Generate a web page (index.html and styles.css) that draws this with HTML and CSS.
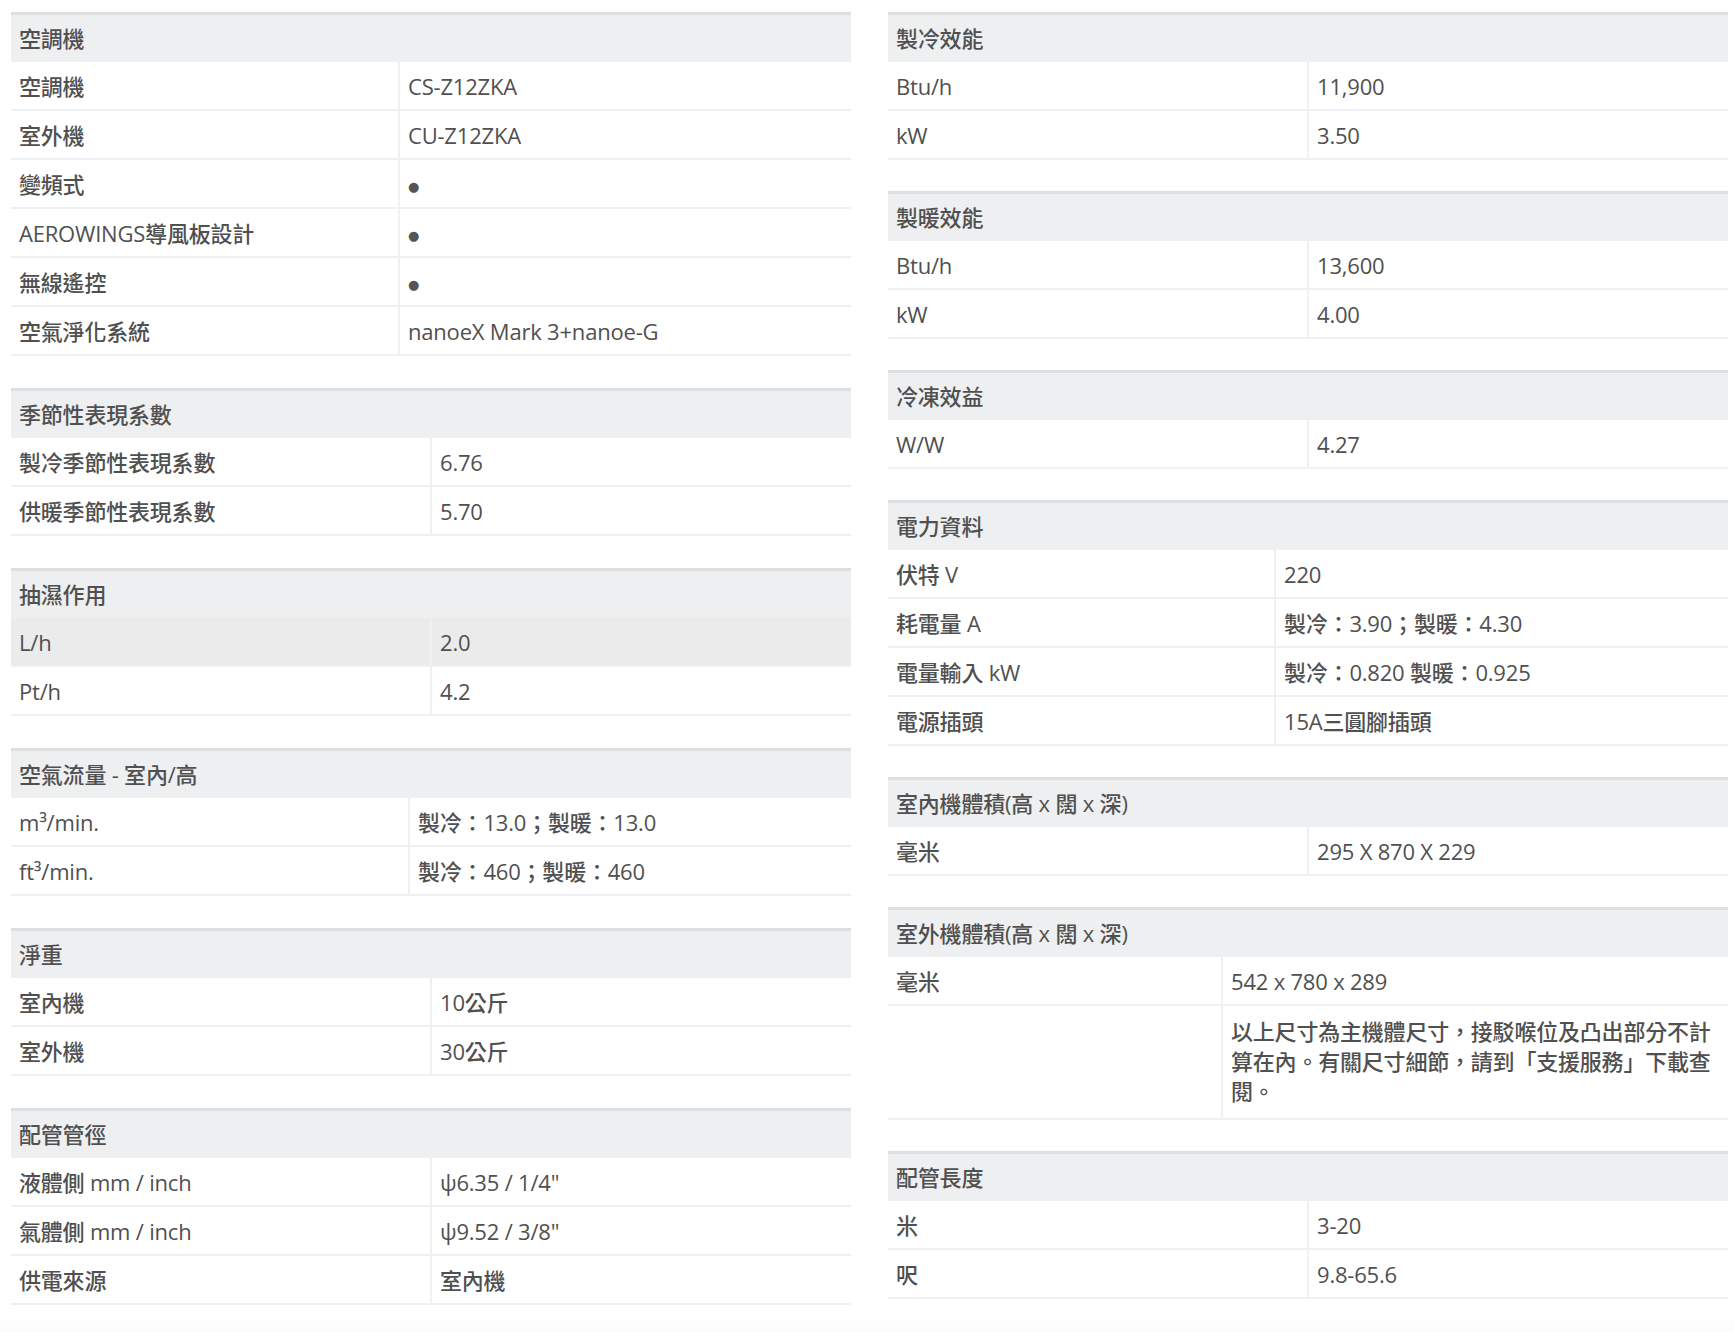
FILE: index.html
```html
<!DOCTYPE html>
<html lang="zh-Hant">
<head>
<meta charset="utf-8">
<title>規格</title>
<link rel="stylesheet" href="styles.css">
</head>
<body>
<main class="specs">
  <div class="col col--left">
    <section class="spec spec--k387">
      <div class="spec-head">空調機</div>
      <div class="spec-row"><div class="k">空調機</div><div class="v">CS-Z12ZKA</div></div>
      <div class="spec-row"><div class="k">室外機</div><div class="v">CU-Z12ZKA</div></div>
      <div class="spec-row"><div class="k">變頻式</div><div class="v"><span class="dot">●</span></div></div>
      <div class="spec-row"><div class="k">AEROWINGS導風板設計</div><div class="v"><span class="dot">●</span></div></div>
      <div class="spec-row"><div class="k">無線遙控</div><div class="v"><span class="dot">●</span></div></div>
      <div class="spec-row"><div class="k">空氣淨化系統</div><div class="v">nanoeX Mark 3+nanoe-G</div></div>
    </section>
    <section class="spec">
      <div class="spec-head">季節性表現系數</div>
      <div class="spec-row"><div class="k">製冷季節性表現系數</div><div class="v">6.76</div></div>
      <div class="spec-row"><div class="k">供暖季節性表現系數</div><div class="v">5.70</div></div>
    </section>
    <section class="spec">
      <div class="spec-head">抽濕作用</div>
      <div class="spec-row is-hover"><div class="k">L/h</div><div class="v">2.0</div></div>
      <div class="spec-row"><div class="k">Pt/h</div><div class="v">4.2</div></div>
    </section>
    <section class="spec spec--k397">
      <div class="spec-head">空氣流量 - 室內/高</div>
      <div class="spec-row"><div class="k">m³/min.</div><div class="v">製冷：13.0；製暖：13.0</div></div>
      <div class="spec-row"><div class="k">ft³/min.</div><div class="v">製冷：460；製暖：460</div></div>
    </section>
    <section class="spec">
      <div class="spec-head">淨重</div>
      <div class="spec-row"><div class="k">室內機</div><div class="v">10公斤</div></div>
      <div class="spec-row"><div class="k">室外機</div><div class="v">30公斤</div></div>
    </section>
    <section class="spec">
      <div class="spec-head">配管管徑</div>
      <div class="spec-row"><div class="k">液體側 mm / inch</div><div class="v">ψ6.35 / 1/4"</div></div>
      <div class="spec-row"><div class="k">氣體側 mm / inch</div><div class="v">ψ9.52 / 3/8"</div></div>
      <div class="spec-row"><div class="k">供電來源</div><div class="v">室內機</div></div>
    </section>
  </div>
  <div class="col">
    <section class="spec">
      <div class="spec-head">製冷效能</div>
      <div class="spec-row"><div class="k">Btu/h</div><div class="v">11,900</div></div>
      <div class="spec-row"><div class="k">kW</div><div class="v">3.50</div></div>
    </section>
    <section class="spec">
      <div class="spec-head">製暖效能</div>
      <div class="spec-row"><div class="k">Btu/h</div><div class="v">13,600</div></div>
      <div class="spec-row"><div class="k">kW</div><div class="v">4.00</div></div>
    </section>
    <section class="spec">
      <div class="spec-head">冷凍效益</div>
      <div class="spec-row"><div class="k">W/W</div><div class="v">4.27</div></div>
    </section>
    <section class="spec spec--k386">
      <div class="spec-head">電力資料</div>
      <div class="spec-row"><div class="k">伏特 V</div><div class="v">220</div></div>
      <div class="spec-row"><div class="k">耗電量 A</div><div class="v">製冷：3.90；製暖：4.30</div></div>
      <div class="spec-row"><div class="k">電量輸入 kW</div><div class="v">製冷：0.820 製暖：0.925</div></div>
      <div class="spec-row"><div class="k">電源插頭</div><div class="v">15A三圓腳插頭</div></div>
    </section>
    <section class="spec">
      <div class="spec-head">室內機體積(高 x 闊 x 深)</div>
      <div class="spec-row"><div class="k">毫米</div><div class="v">295 X 870 X 229</div></div>
    </section>
    <section class="spec spec--k333">
      <div class="spec-head">室外機體積(高 x 闊 x 深)</div>
      <div class="spec-row"><div class="k">毫米</div><div class="v">542 x 780 x 289</div></div>
      <div class="spec-row"><div class="k"></div><div class="v v--note">以上尺寸為主機體尺寸，接駁喉位及凸出部分不計算在內。有關尺寸細節，請到「支援服務」下載查閱。</div></div>
    </section>
    <section class="spec">
      <div class="spec-head">配管長度</div>
      <div class="spec-row"><div class="k">米</div><div class="v">3-20</div></div>
      <div class="spec-row"><div class="k">呎</div><div class="v">9.8-65.6</div></div>
    </section>
  </div>
</main>
<div class="page-foot"></div>
</body>
</html>
```

FILE: styles.css
```css
html, body {
  margin: 0;
  padding: 0;
  background: #ffffff;
}

body {
  font-family: "Open Sans", "Noto Sans CJK TC", sans-serif;
  font-size: 22px;
  font-weight: 500;
  letter-spacing: -0.2px;
  color: #505050;
}

.specs {
  display: flex;
  gap: 37px;
  padding: 12px 0 0 11px;
}

.col {
  width: 840px;
  display: flex;
  flex-direction: column;
  gap: 31px;
}

.col--left {
  gap: 32px;
}

.spec {
  --k: 419px;
}

.spec--k387 { --k: 387px; }
.spec--k397 { --k: 397px; }
.spec--k386 { --k: 386px; }
.spec--k333 { --k: 333px; }

.spec-head {
  background: #eeeff1;
  border-top: 3px solid #dedfe1;
  padding: 8px 8px 9px;
  line-height: 30px;
}

.spec-row {
  display: grid;
  grid-template-columns: var(--k) 1fr;
  border-bottom: 2px solid #eef1f4;
  line-height: 30px;
}

.spec-row.is-hover {
  background: #ebebeb;
}

.k {
  padding: 9px 8px 8px;
}

.v {
  padding: 9px 8px 8px;
  border-left: 2px solid #eef1f4;
}

.v--note {
  padding-top: 10px;
  padding-bottom: 12px;
}

.dot {
  font-family: "DejaVu Sans", sans-serif;
  font-size: 13px;
  line-height: 0;
  color: #555555;
  vertical-align: 2px;
}

.page-foot {
  height: 40px;
  margin-top: 8px;
  background: linear-gradient(#ffffff, #f7f7f7);
}
```
